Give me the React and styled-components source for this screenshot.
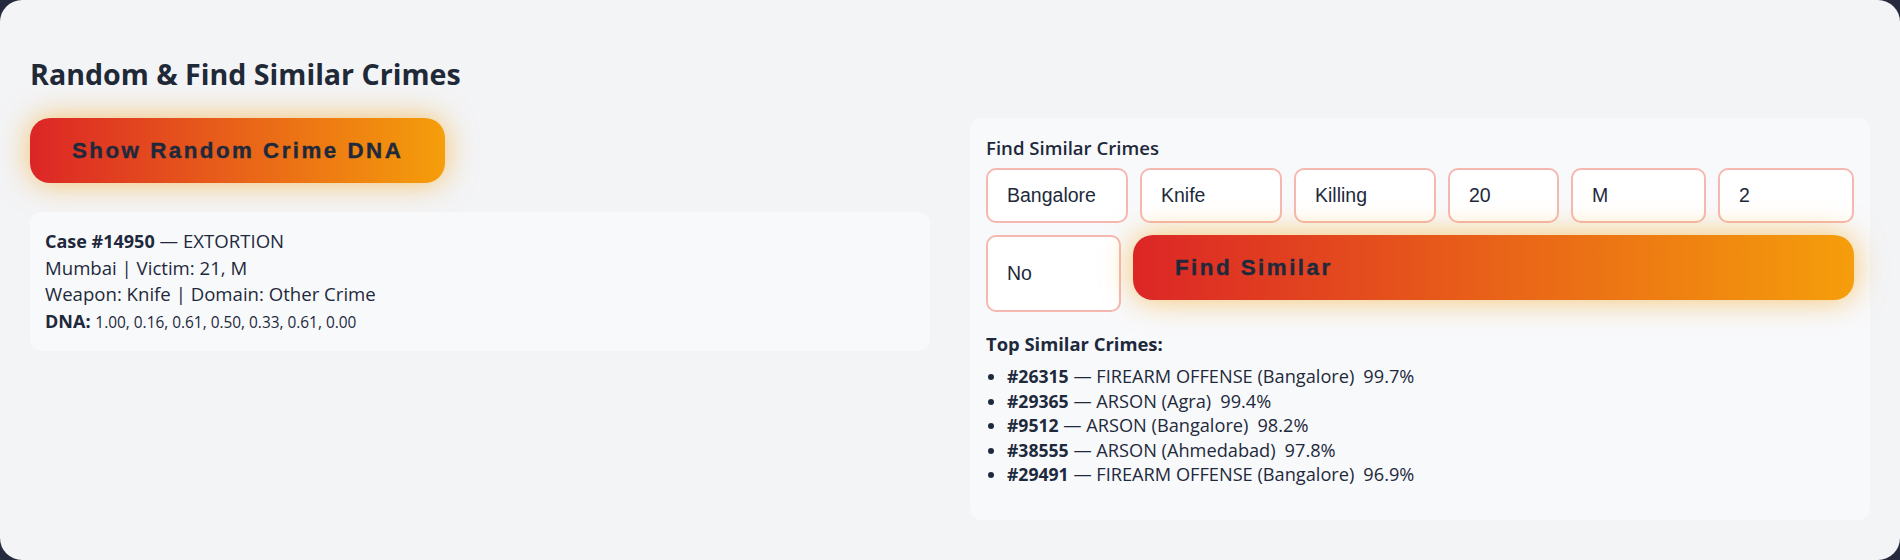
import React from "react";
import styled, { createGlobalStyle } from "styled-components";

const GlobalStyle = createGlobalStyle`
  html, body {
    margin: 0;
    padding: 0;
    background: #262a3d;
  }
  body {
    font-family: "Segoe UI", "Open Sans", sans-serif;
  }
`;

const Card = styled.div`
  width: 1900px;
  height: 560px;
  box-sizing: border-box;
  background: #f3f4f6;
  border-radius: 22px;
  padding: 57px 30px 0;
  color: #1e293b;
  overflow: hidden;
`;

const Title = styled.h2`
  margin: 0 0 27px;
  font-size: 28.6px;
  line-height: 34px;
  font-weight: 700;
  color: #1f2937;
`;

const Columns = styled.div`
  display: grid;
  grid-template-columns: 1fr 1fr;
  gap: 40px;
  align-items: start;
`;

const LeftCol = styled.div`
  display: flex;
  flex-direction: column;
  align-items: flex-start;
  gap: 29px;
`;

const GlowButton = styled.button`
  height: 65px;
  padding: 0 ${(p) => (p.$wide ? "42px" : "42px")};
  border: none;
  border-radius: 20px;
  background: linear-gradient(90deg, #dc2626, #f59e0b);
  box-shadow: 0 0 30px rgba(245, 158, 11, 0.6);
  color: #1e293b;
  font-family: "Liberation Sans", Arial, sans-serif;
  font-size: 22.3px;
  font-weight: 700;
  letter-spacing: 2.5px;
  -webkit-text-stroke: 0.4px #1e293b;
  text-align: ${(p) => (p.$wide ? "left" : "center")};
  flex: ${(p) => (p.$wide ? "1" : "none")};
  cursor: pointer;
`;

const CaseBox = styled.div`
  width: 100%;
  box-sizing: border-box;
  padding: 16px 15px 14px;
  background: #f8f9fb;
  border-radius: 12px;
  font-size: 18.6px;
  line-height: 26.7px;
  color: #1e293b;
`;

const Line = styled.div``;

const Bold = styled.b`
  font-size: 18px;
`;

const Small = styled.span`
  font-size: 15.4px;
`;

const Panel = styled.div`
  box-sizing: border-box;
  height: 402px;
  padding: 18px 16px;
  background: #f8f9fb;
  border-radius: 12px;
`;

const Label = styled.div`
  font-size: 18.6px;
  line-height: 24px;
  font-weight: 600;
  margin-bottom: 8px;
`;

const Form = styled.div`
  display: flex;
  flex-wrap: wrap;
  align-items: flex-start;
  gap: 12px;
`;

const Field = styled.input`
  box-sizing: border-box;
  width: ${(p) => p.$w}px;
  height: ${(p) => p.$h || 55}px;
  padding: 0 10px 0 19px;
  border: 2px solid #f5b8b1;
  border-radius: 10px;
  background: #fff;
  color: #1e293b;
  font-family: "Liberation Sans", Arial, sans-serif;
  font-size: 19.5px;
  outline: none;
`;

const SubTitle = styled.div`
  margin-top: 20px;
  font-size: 18.4px;
  line-height: 24px;
  font-weight: 700;
`;

const List = styled.ul`
  margin: 8px 0 0;
  padding-left: 21px;
  font-size: 18.2px;
  line-height: 24.6px;
`;

const Item = styled.li`
  b {
    font-size: 17.6px;
  }
`;

const Pct = styled.span`
  margin-left: 9px;
`;

const fields = [
  { v: "Bangalore", w: 142 },
  { v: "Knife", w: 142 },
  { v: "Killing", w: 142 },
  { v: "20", w: 111 },
  { v: "M", w: 135 },
  { v: "2", w: 136 },
];

const similar = [
  ["#26315", "FIREARM OFFENSE (Bangalore)", "99.7%"],
  ["#29365", "ARSON (Agra)", "99.4%"],
  ["#9512", "ARSON (Bangalore)", "98.2%"],
  ["#38555", "ARSON (Ahmedabad)", "97.8%"],
  ["#29491", "FIREARM OFFENSE (Bangalore)", "96.9%"],
];

export default function App() {
  return (
    <>
      <GlobalStyle />
      <Card>
        <Title>Random &amp; Find Similar Crimes</Title>
        <Columns>
          <LeftCol>
            <GlowButton>Show Random Crime DNA</GlowButton>
            <CaseBox>
              <Line>
                <Bold>Case #14950</Bold> — EXTORTION
              </Line>
              <Line>Mumbai | Victim: 21, M</Line>
              <Line>Weapon: Knife | Domain: Other Crime</Line>
              <Line>
                <Bold>DNA:</Bold> <Small>1.00, 0.16, 0.61, 0.50, 0.33, 0.61, 0.00</Small>
              </Line>
            </CaseBox>
          </LeftCol>
          <Panel>
            <Label>Find Similar Crimes</Label>
            <Form>
              {fields.map((f) => (
                <Field key={f.v} $w={f.w} defaultValue={f.v} />
              ))}
              <Field $w={135} $h={77} defaultValue="No" />
              <GlowButton $wide>Find Similar</GlowButton>
            </Form>
            <SubTitle>Top Similar Crimes:</SubTitle>
            <List>
              {similar.map(([id, what, pct]) => (
                <Item key={id}>
                  <b>{id}</b> — {what}
                  <Pct>{pct}</Pct>
                </Item>
              ))}
            </List>
          </Panel>
        </Columns>
      </Card>
    </>
  );
}
